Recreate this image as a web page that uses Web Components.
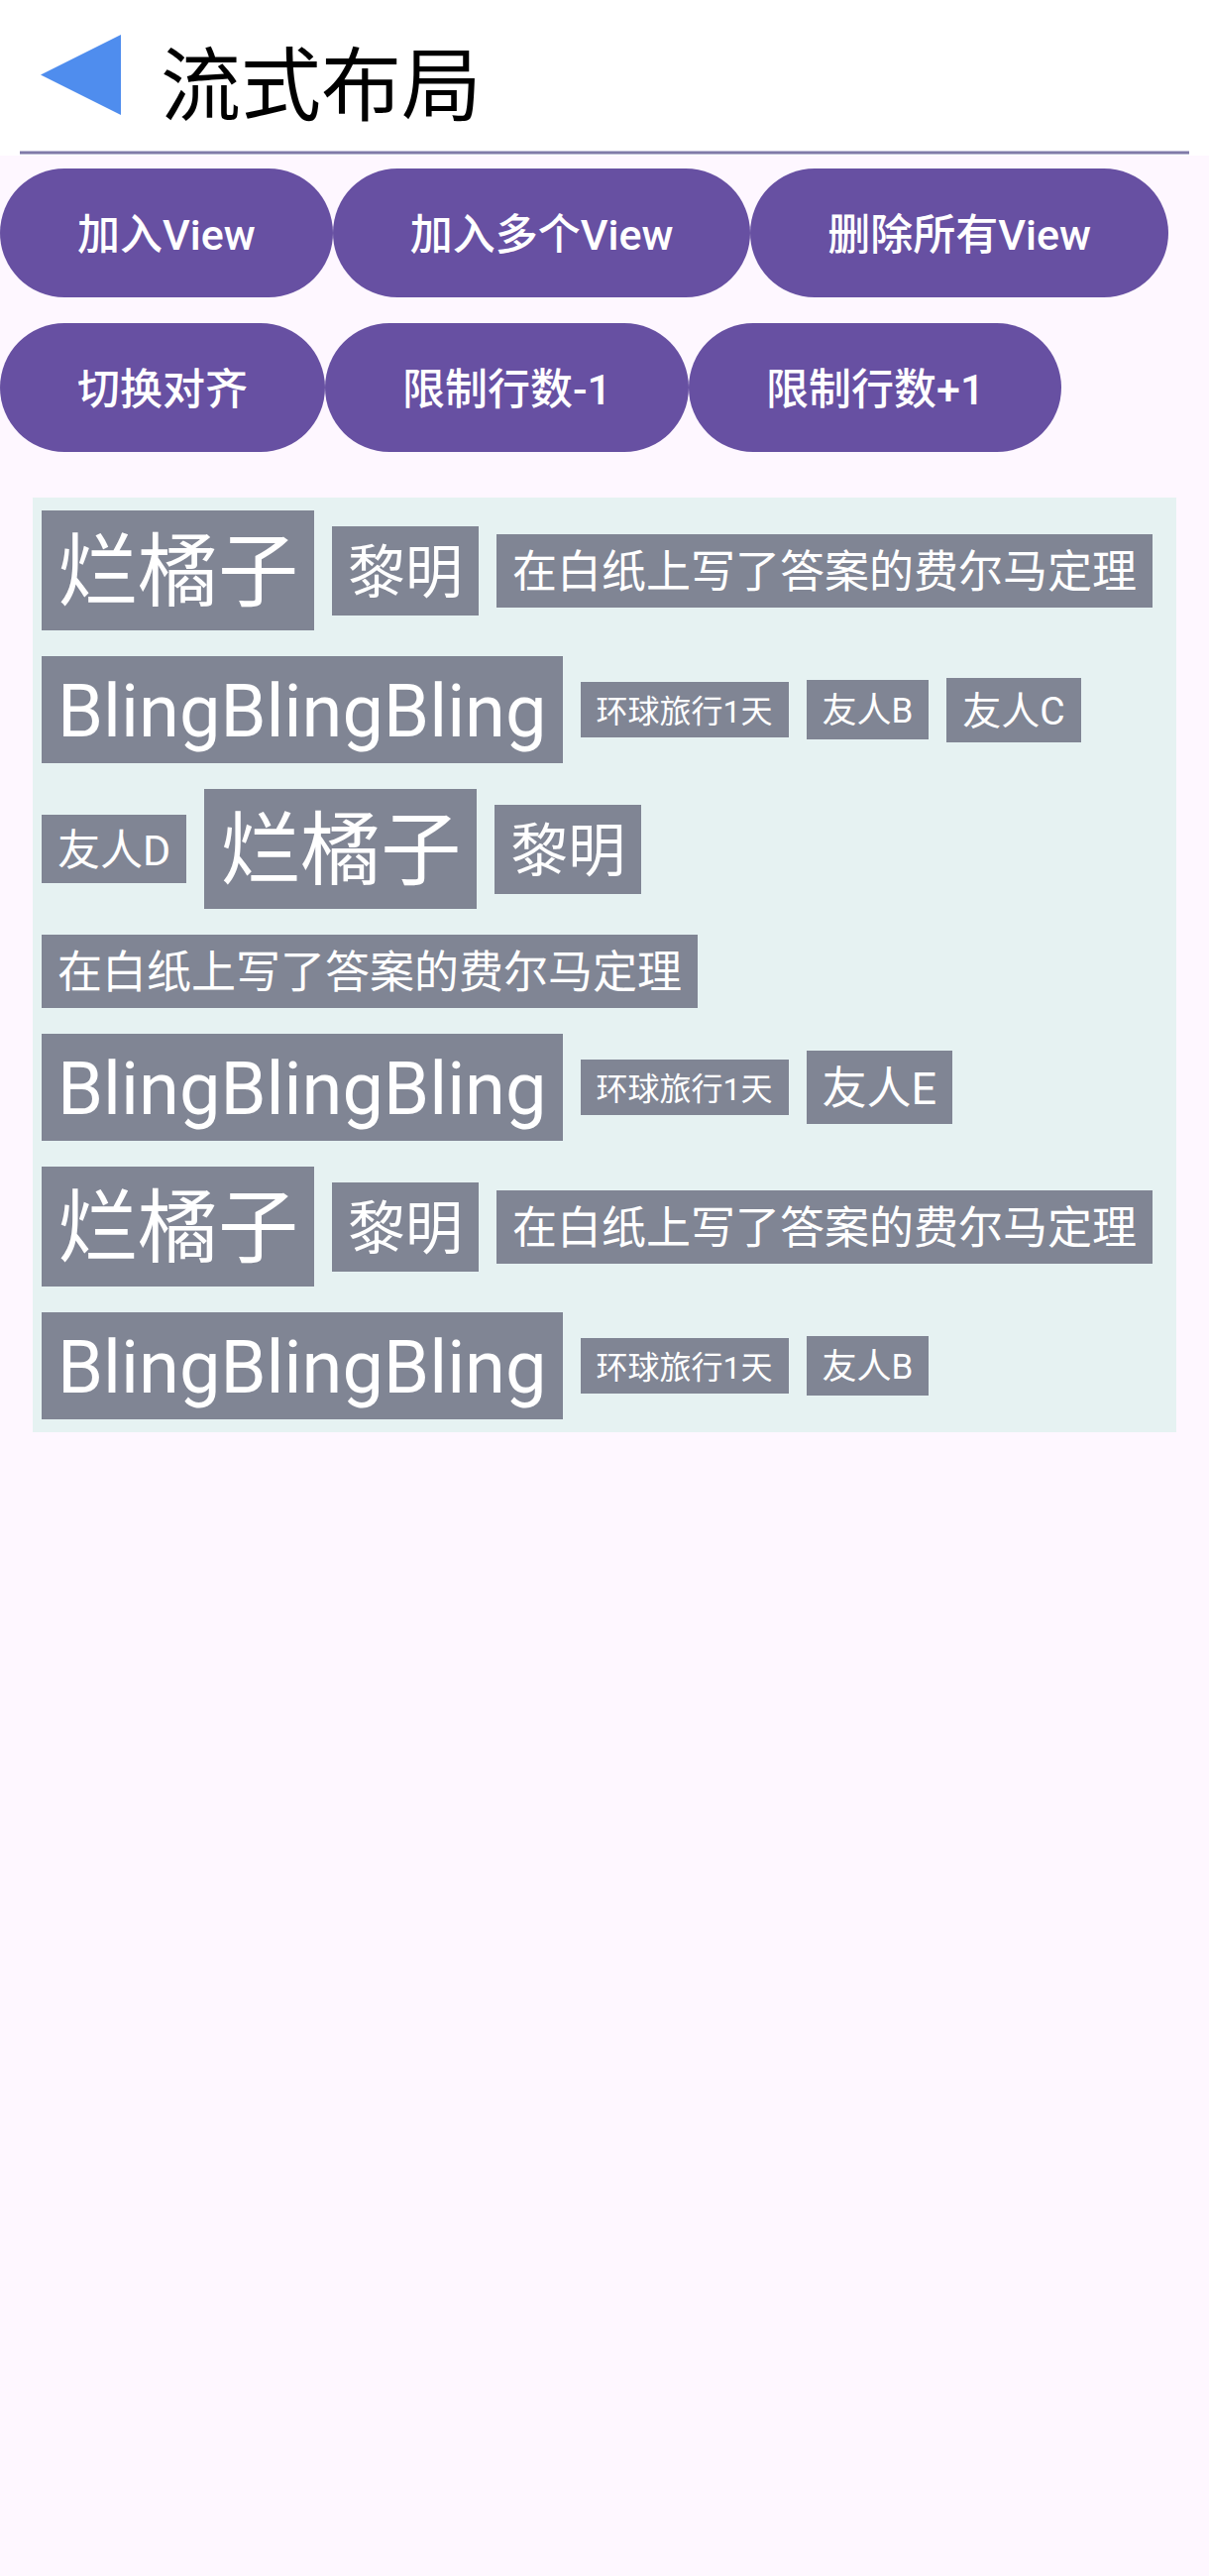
<!DOCTYPE html>
<html lang="zh-CN">
<head>
<meta charset="utf-8">
<meta name="viewport" content="width=device-width, initial-scale=1">
<title>流式布局</title>
<style>
  html { background: #fef7ff; }
  body { margin: 0; font-family: Roboto, "Noto Sans CJK SC", sans-serif; }
</style>
</head>
<body>
<flow-page></flow-page>

<template id="title-bar">
  <style>
    :host { display: block; padding-bottom: 1px; background: #fff; }
    header { display: flex; align-items: flex-start; gap: 40px; padding: 35px 41px 0; height: 117px; }
    button { display: block; width: 81px; height: 81px; padding: 0; border: 0; background: none; cursor: pointer; }
    svg { display: block; width: 100%; height: 100%; fill: #4f8dee; }
    h1 { margin: 0; font-size: 81px; line-height: 106px; font-weight: 400; color: #000; }
    .rule { height: 2px; margin: 0 20px; border: solid #bcbad4; border-width: 1px 0; background: #807aa8; }
  </style>
  <header>
    <button type="button" aria-label="返回"><svg viewBox="0 0 81 81" aria-hidden="true"><path d="M0 40.5 81 0V81Z"/></svg></button>
    <h1><slot></slot></h1>
  </header>
  <div class="rule"></div>
</template>

<template id="pill-button">
  <style>
    :host { display: block; }
    button {
      display: block; height: 130px; padding: 3px 78px 0; border: 0; border-radius: 65px;
      background: #6750a2; color: #fff; font: inherit; font-size: 43px; font-weight: 500;
      line-height: 56px; white-space: nowrap; cursor: pointer;
    }
  </style>
  <button type="button"><slot></slot></button>
</template>

<template id="button-row">
  <style>
    :host { display: flex; padding: 13px 0; }
  </style>
  <slot></slot>
</template>

<template id="flow-chip">
  <style>
    :host { display: block; padding: 10px 16px 6px; background: #808594; color: #fff; white-space: nowrap; }
    :host([size="xs"]) { font-size: 32px; line-height: 40px; }
    :host([size="sm"]) { font-size: 35px; line-height: 44px; }
    :host([size="md"]) { font-size: 39px; line-height: 49px; }
    :host([size="lg"]) { font-size: 43px; line-height: 53px; }
    :host([size="xl"]) { font-size: 45px; line-height: 58px; }
    :host([size="2xl"]) { font-size: 58px; line-height: 74px; }
    :host([size="3xl"]) { font-size: 74px; line-height: 92px; }
    :host([size="4xl"]) { font-size: 81px; line-height: 105px; }
  </style>
  <slot></slot>
</template>

<template id="flow-layout">
  <style>
    :host {
      display: flex; flex-wrap: wrap; align-items: center; gap: 26px 18px;
      margin: 33px; padding: 13px 9px; background: #e6f2f2;
    }
  </style>
  <slot></slot>
</template>

<template id="flow-page">
  <style>:host { display: block; }</style>
  <title-bar>流式布局</title-bar>
  <main>
    <button-row>
      <pill-button>加入View</pill-button>
      <pill-button>加入多个View</pill-button>
      <pill-button>删除所有View</pill-button>
    </button-row>
    <button-row>
      <pill-button>切换对齐</pill-button>
      <pill-button>限制行数-1</pill-button>
      <pill-button>限制行数+1</pill-button>
    </button-row>
    <flow-layout>
      <flow-chip size="4xl">烂橘子</flow-chip>
      <flow-chip size="2xl">黎明</flow-chip>
      <flow-chip size="xl">在白纸上写了答案的费尔马定理</flow-chip>
      <flow-chip size="3xl">BlingBlingBling</flow-chip>
      <flow-chip size="xs">环球旅行1天</flow-chip>
      <flow-chip size="sm">友人B</flow-chip>
      <flow-chip size="md">友人C</flow-chip>
      <flow-chip size="lg">友人D</flow-chip>
      <flow-chip size="4xl">烂橘子</flow-chip>
      <flow-chip size="2xl">黎明</flow-chip>
      <flow-chip size="xl">在白纸上写了答案的费尔马定理</flow-chip>
      <flow-chip size="3xl">BlingBlingBling</flow-chip>
      <flow-chip size="xs">环球旅行1天</flow-chip>
      <flow-chip size="xl">友人E</flow-chip>
      <flow-chip size="4xl">烂橘子</flow-chip>
      <flow-chip size="2xl">黎明</flow-chip>
      <flow-chip size="xl">在白纸上写了答案的费尔马定理</flow-chip>
      <flow-chip size="3xl">BlingBlingBling</flow-chip>
      <flow-chip size="xs">环球旅行1天</flow-chip>
      <flow-chip size="sm">友人B</flow-chip>
    </flow-layout>
  </main>
</template>

<script>
  class TemplateElement extends HTMLElement {
    constructor() {
      super();
      const template = document.getElementById(this.localName);
      this.attachShadow({ mode: "open" }).append(template.content.cloneNode(true));
    }
  }
  customElements.define("title-bar", class TitleBar extends TemplateElement {});
  customElements.define("pill-button", class PillButton extends TemplateElement {});
  customElements.define("button-row", class ButtonRow extends TemplateElement {});
  customElements.define("flow-chip", class FlowChip extends TemplateElement {});
  customElements.define("flow-layout", class FlowLayout extends TemplateElement {});
  customElements.define("flow-page", class FlowPage extends TemplateElement {});
</script>
</body>
</html>
